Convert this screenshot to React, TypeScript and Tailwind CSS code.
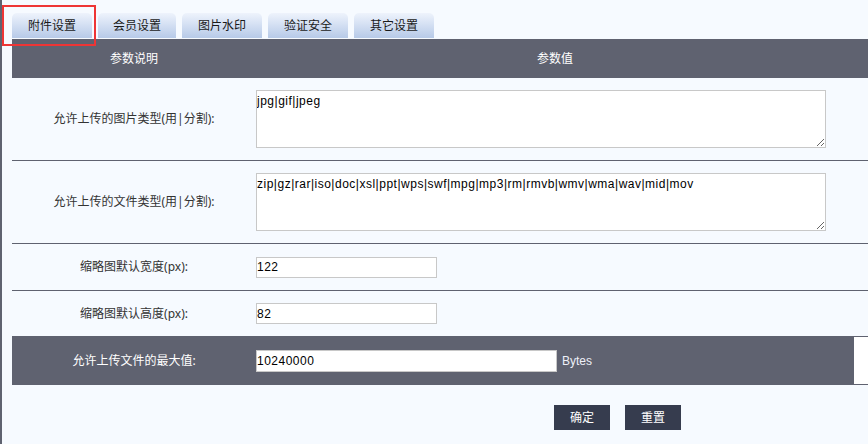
import React from "react";

const font = { fontFamily: '"Noto Sans", "Noto Sans CJK SC", sans-serif' };
const fieldFont = { fontFamily: '"Liberation Sans", "Noto Sans CJK SC", sans-serif' };

const tabs = ["附件设置", "会员设置", "图片水印", "验证安全", "其它设置"];

function Label({ children, dark }: { children: React.ReactNode; dark?: boolean }) {
  return (
    <div
      className={`w-[244px] shrink-0 flex items-center justify-center text-[12px] ${
        dark ? "text-white" : "text-[#333]"
      }`}
    >
      {children}
    </div>
  );
}

export default function App() {
  return (
    <div
      className="relative w-[868px] h-[444px] overflow-hidden bg-[#f6faff] border-l-2 border-[#5f6270]"
      style={font}
    >
      {/* red highlight box */}
      <div className="absolute left-[0px] top-[5px] w-[94px] h-[41px] border-2 border-[#ee3535] pointer-events-none z-10" />

      <div className="pl-[10px] pt-[13px]">
        {/* tabs */}
        <div className="flex gap-[6px] h-[25px]">
          {tabs.map((t, i) => (
            <div
              key={t}
              className={`${i === 1 ? "w-[78px]" : "w-[80px]"} h-[25px] rounded-t-[5px] bg-gradient-to-b from-[#eef3fc] to-[#b7cae8] flex items-center justify-center text-[12px] text-[#1a1a1a]`}
            >
              {t}
            </div>
          ))}
        </div>

        {/* header */}
        <div className="mt-[1px] h-[39px] bg-[#5f6270] flex text-white text-[12px]">
          <div className="w-[244px] shrink-0 flex items-center justify-center">参数说明</div>
          <div className="w-[598px] shrink-0 flex items-center justify-center">参数值</div>
        </div>

        {/* row 1 */}
        <div className="h-[83px] border-b border-[#5f6270] flex">
          <Label>允许上传的图片类型(用|分割):</Label>
          <div className="flex items-center">
            <textarea
              defaultValue="jpg|gif|jpeg"
              className="w-[570px] h-[58px] bg-white border border-[#c8c8c8] text-[12px] tracking-[0.5px] text-black leading-[16px] px-[0px] pt-[2px] outline-none"
              style={fieldFont}
            />
          </div>
        </div>

        {/* row 2 */}
        <div className="h-[83px] border-b border-[#5f6270] flex">
          <Label>允许上传的文件类型(用|分割):</Label>
          <div className="flex items-center">
            <textarea
              defaultValue="zip|gz|rar|iso|doc|xsl|ppt|wps|swf|mpg|mp3|rm|rmvb|wmv|wma|wav|mid|mov"
              className="w-[570px] h-[58px] bg-white border border-[#c8c8c8] text-[12px] tracking-[0.5px] text-black leading-[16px] px-[0px] pt-[2px] outline-none"
              style={fieldFont}
            />
          </div>
        </div>

        {/* row 3 */}
        <div className="h-[47px] border-b border-[#5f6270] flex">
          <Label>缩略图默认宽度(px):</Label>
          <div className="flex items-center">
            <input
              defaultValue="122"
              className="w-[181px] h-[21px] bg-white border border-[#c8c8c8] text-[12px] tracking-[0.5px] text-black px-[0px] outline-none"
              style={fieldFont}
            />
          </div>
        </div>

        {/* row 4 */}
        <div className="h-[46px] border-b border-[#5f6270] flex">
          <Label>缩略图默认高度(px):</Label>
          <div className="flex items-center">
            <input
              defaultValue="82"
              className="w-[181px] h-[21px] bg-white border border-[#c8c8c8] text-[12px] tracking-[0.5px] text-black px-[0px] outline-none"
              style={fieldFont}
            />
          </div>
        </div>

        {/* row 5 dark */}
        <div className="h-[48px] border-b border-[#5f6270] flex">
          <div className="w-[842px] shrink-0 bg-[#5f6270] flex">
            <Label dark>允许上传文件的最大值:</Label>
            <div className="flex items-center gap-[5px]">
              <input
                defaultValue="10240000"
                className="w-[301px] h-[22px] bg-white border border-[#c8c8c8] text-[12px] tracking-[0.5px] text-black px-[0px] outline-none"
                style={fieldFont}
              />
              <span className="text-[12px] text-[#eef0f8]" style={fieldFont}>
                Bytes
              </span>
            </div>
          </div>
          <div className="flex-1 bg-white" />
        </div>

        {/* buttons */}
        <div className="flex gap-[15px] pl-[542px] mt-[20px]">
          <button className="w-[56px] h-[25px] bg-[#363c4e] text-white text-[12px]" style={font}>
            确定
          </button>
          <button className="w-[56px] h-[25px] bg-[#363c4e] text-white text-[12px]" style={font}>
            重置
          </button>
        </div>
      </div>
    </div>
  );
}
